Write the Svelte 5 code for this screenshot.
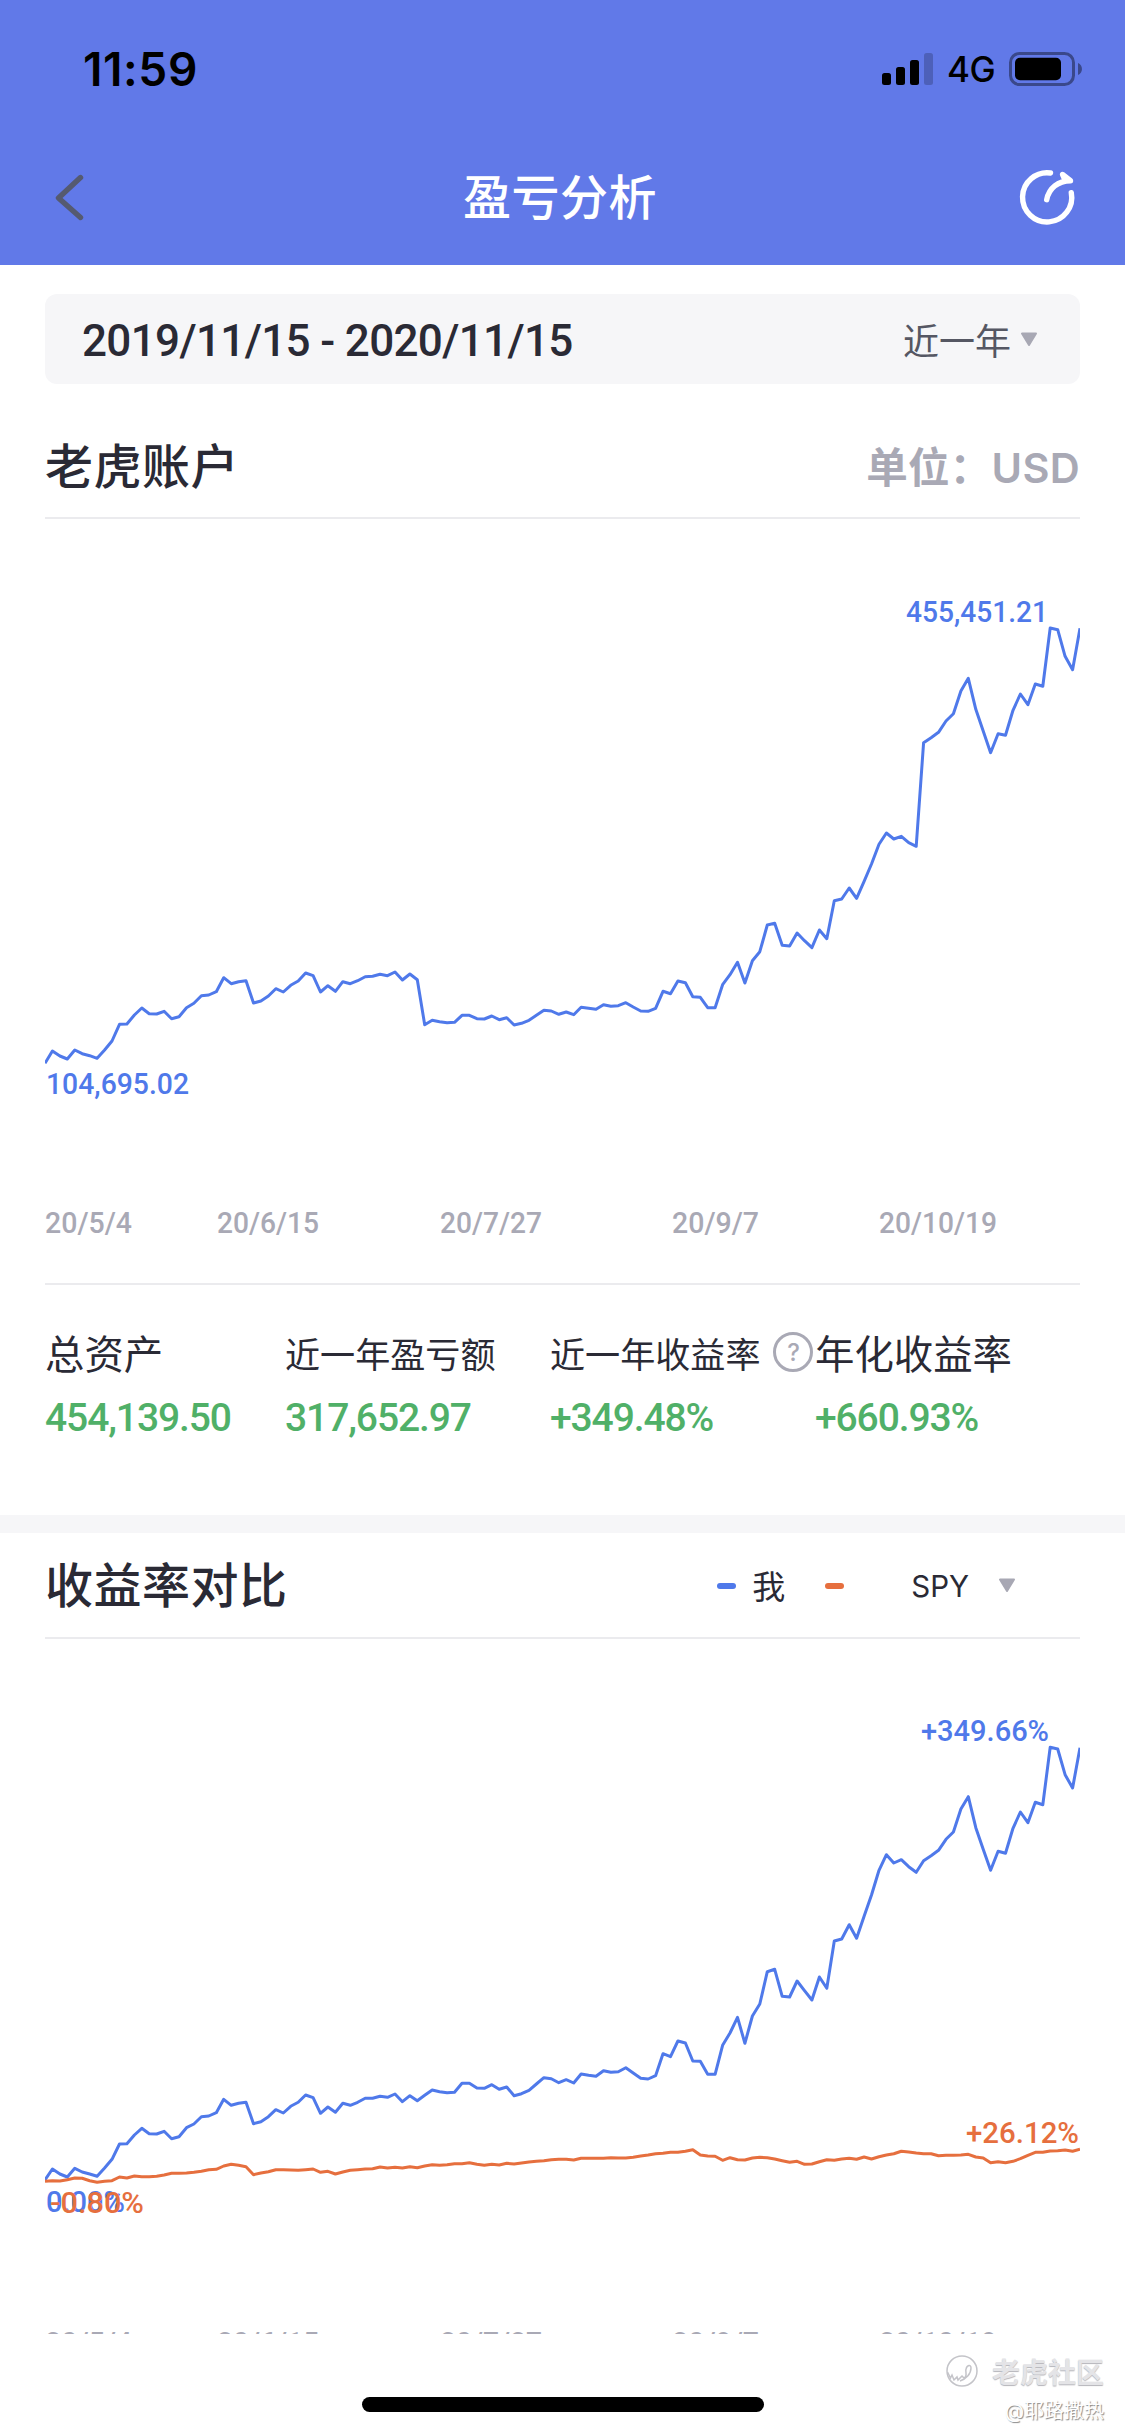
<script lang="ts">
	// Profit & loss overview: account value chart, key figures and the
	// return comparison against a benchmark.
	type Line = { color: string; points: number[] };
	type Tag = { text: string; x: number; y: number; width: number; color: string };

	const BLUE = '#4f79ea';
	const ORANGE = '#e66f3e';

	const CHART_WIDTH = 1035;
	/** samples are stored in thirds of a pixel, measured from the plot top */
	const UNIT = 3;
	const PLOT_TOP = 61;

	const assets = [
		1450, 1413, 1428, 1437, 1410, 1421, 1427, 1435, 1410, 1383, 1333, 1332, 1305, 1284, 1301, 1302,
		1294, 1316, 1310, 1283, 1270, 1247, 1245, 1235, 1193, 1211, 1205, 1202, 1269, 1263, 1248, 1226,
		1236, 1216, 1203, 1179, 1187, 1236, 1217, 1234, 1205, 1211, 1202, 1190, 1189, 1183, 1187, 1176,
		1200, 1182, 1199, 1334, 1321, 1325, 1328, 1327, 1306, 1306, 1316, 1317, 1308, 1319, 1313, 1335,
		1330, 1321, 1306, 1291, 1293, 1303, 1296, 1304, 1282, 1285, 1288, 1274, 1279, 1277, 1268, 1281,
		1293, 1294, 1285, 1234, 1241, 1203, 1208, 1250, 1252, 1283, 1283, 1214, 1184, 1147, 1209, 1142,
		1115, 1035, 1030, 1096, 1098, 1059, 1082, 1103, 1050, 1076, 962, 957, 924, 955, 904, 852, 793,
		759, 777, 769, 788, 799, 488, 473, 457, 423, 401, 333, 295, 388, 453, 518, 461, 466, 391, 342,
		374, 312, 319, 144, 149, 229, 269, 145
	];

	const mine = [
		1440, 1407, 1422, 1431, 1405, 1416, 1422, 1429, 1404, 1378, 1332, 1331, 1305, 1285, 1301, 1302,
		1294, 1316, 1310, 1283, 1272, 1250, 1248, 1238, 1198, 1216, 1210, 1207, 1271, 1265, 1250, 1229,
		1239, 1219, 1207, 1185, 1193, 1240, 1221, 1237, 1210, 1216, 1207, 1195, 1195, 1189, 1192, 1182,
		1205, 1187, 1202, 1186, 1170, 1175, 1178, 1177, 1150, 1150, 1164, 1165, 1154, 1168, 1161, 1187,
		1181, 1171, 1152, 1133, 1136, 1148, 1139, 1149, 1122, 1126, 1129, 1112, 1117, 1115, 1103, 1119,
		1135, 1137, 1127, 1061, 1070, 1023, 1029, 1083, 1084, 1123, 1123, 1036, 999, 952, 1030, 948,
		912, 815, 808, 889, 891, 843, 872, 900, 831, 865, 723, 717, 674, 715, 649, 585, 511, 464, 489,
		479, 500, 517, 482, 467, 451, 418, 396, 327, 290, 383, 448, 511, 454, 460, 385, 336, 368, 307,
		314, 142, 147, 224, 264, 143
	];

	const spy = [
		1444, 1442, 1443, 1439, 1434, 1435, 1442, 1447, 1444, 1442, 1431, 1434, 1428, 1430, 1430, 1429,
		1425, 1420, 1420, 1419, 1417, 1414, 1409, 1408, 1398, 1393, 1396, 1400, 1424, 1419, 1415, 1409,
		1409, 1410, 1411, 1409, 1407, 1417, 1414, 1422, 1416, 1411, 1409, 1407, 1406, 1401, 1404, 1402,
		1404, 1400, 1403, 1398, 1394, 1396, 1394, 1391, 1391, 1388, 1393, 1396, 1393, 1395, 1390, 1392,
		1389, 1386, 1384, 1382, 1379, 1378, 1378, 1380, 1375, 1375, 1375, 1375, 1373, 1374, 1374, 1372,
		1368, 1365, 1361, 1360, 1357, 1357, 1354, 1349, 1365, 1368, 1369, 1381, 1373, 1379, 1380, 1374,
		1372, 1373, 1377, 1382, 1387, 1384, 1393, 1392, 1385, 1379, 1381, 1377, 1375, 1378, 1371, 1377,
		1370, 1365, 1361, 1354, 1356, 1359, 1361, 1361, 1367, 1366, 1366, 1365, 1363, 1371, 1374, 1388,
		1385, 1388, 1384, 1376, 1366, 1357, 1357, 1353, 1352, 1350, 1354, 1348
	];

	const assetTags: Tag[] = [
		{ text: '455,451.21', x: 861, y: 102.5, width: 142, color: BLUE },
		{ text: '104,695.02', x: 1, y: 574.5, width: 143, color: BLUE }
	];

	const returnTags: Tag[] = [
		{ text: '+349.66%', x: 876, y: 102, width: 128, color: BLUE },
		{ text: '+26.12%', x: 921, y: 504, width: 113, color: ORANGE },
		{ text: '0.00%', x: 1, y: 572.5, width: 79, color: BLUE },
		{ text: '-0.80%', x: 5, y: 573.5, width: 94, color: ORANGE }
	];

	const ticks = [
		{ text: '20/5/4', x: 0, width: 87 },
		{ text: '20/6/15', x: 172, width: 102 },
		{ text: '20/7/27', x: 395, width: 102 },
		{ text: '20/9/7', x: 627, width: 87 },
		{ text: '20/10/19', x: 834, width: 118 }
	];

	const stats = [
		{ label: '总资产', value: '454,139.50', large: true, help: false },
		{ label: '近一年盈亏额', value: '317,652.97', large: false, help: false },
		{ label: '近一年收益率', value: '+349.48%', large: false, help: true },
		{ label: '年化收益率', value: '+660.93%', large: true, help: false }
	];

	const toPolyline = (points: number[]): string => {
		const step = CHART_WIDTH / (points.length - 1);
		return points.map((p, i) => `${(i * step).toFixed(1)},${(PLOT_TOP + p / UNIT).toFixed(1)}`).join(' ');
	};
</script>

{#snippet chart(lines: Line[], tags: Tag[])}
	<svg class="chart" width="1035" height="764" viewBox="0 0 1035 764">
		{#each lines as line (line.color)}
			<polyline points={toPolyline(line.points)} stroke={line.color} />
		{/each}
		{#each tags as tag (tag.text)}
			<text x={tag.x} y={tag.y} textLength={tag.width} lengthAdjust="spacingAndGlyphs" fill={tag.color}>{tag.text}</text>
		{/each}
		{#each ticks as tick (tick.text)}
			<text class="tick" x={tick.x} y="713.5" textLength={tick.width} lengthAdjust="spacingAndGlyphs">{tick.text}</text>
		{/each}
	</svg>
{/snippet}

{#snippet caret()}
	<svg class="caret" width="18" height="15" viewBox="0 0 18 15">
		<path d="M2 1.5h14L9 13z" />
	</svg>
{/snippet}

<div class="screen">
	<header>
		<div class="status">
			<span class="clock">11:59</span>
			<div class="indicators">
				<svg width="52" height="34" viewBox="0 0 52 34">
					<rect x="0" y="21" width="9" height="12" rx="2.5" />
					<rect x="14" y="15" width="9" height="18" rx="2.5" />
					<rect x="28" y="8" width="9" height="25" rx="2.5" />
					<rect x="42" y="1" width="9" height="32" rx="2.5" opacity="0.2" />
				</svg>
				<span class="network">4G</span>
				<svg width="74" height="34" viewBox="0 0 74 34">
					<rect x="1.5" y="1.5" width="63" height="31" rx="9" fill="none" stroke="#000" stroke-width="3" opacity="0.4" />
					<rect x="6" y="5.7" width="46" height="22.6" rx="5" />
					<path d="M69 11c5.300 2 5.300 10 0 12z" opacity="0.4" />
				</svg>
			</div>
		</div>
		<nav>
			<svg class="back" width="40" height="50" viewBox="0 0 40 50">
				<path d="M30.500 4.500L8.500 25l22 19.500" />
			</svg>
			<h1>盈亏分析</h1>
			<svg class="share" width="60" height="60" viewBox="0 0 60 60">
				<path d="M33.500 5A24.600 24.600 0 1 0 54.300 24.700" />
				<path d="M29.700 31.700C32 20 41 13 53.500 12.700L45.500 6.500l3 6.800" />
			</svg>
		</nav>
	</header>

	<main>
		<section class="account">
			<div class="range">
				<span class="dates">2019/11/15 - 2020/11/15</span>
				<span class="period">近一年{@render caret()}</span>
			</div>
			<div class="heading first">
				<h2>老虎账户</h2>
				<span class="unit">单位：USD</span>
			</div>
			{@render chart([{ color: BLUE, points: assets }], assetTags)}
			<div class="stats">
				{#each stats as stat (stat.label)}
					<div class="stat">
						<div class="label" class:large={stat.large}>
							{stat.label}
							{#if stat.help}
								<span class="help">?</span>
							{/if}
						</div>
						<div class="value">{stat.value}</div>
					</div>
				{/each}
			</div>
		</section>

		<section class="compare">
			<div class="heading second">
				<h2>收益率对比</h2>
				<div class="legend">
					<i class="dash mine"></i>
					<span class="me">我</span>
					<i class="dash other"></i>
					<span class="bench">SPY</span>
					{@render caret()}
				</div>
			</div>
			{@render chart(
				[
					{ color: BLUE, points: mine },
					{ color: ORANGE, points: spy }
				],
				returnTags
			)}
		</section>
	</main>

	<footer>
		<div class="home"></div>
		<div class="watermark">
			<div class="brand">
				<svg width="34" height="34" viewBox="0 0 34 34">
					<circle cx="17" cy="17" r="15" />
					<path d="M2.500 18l3 6 1.500-3 2 5 3-3 1 3 4-4 2 2c4-2 1-6 2-9 1-4 5-5 5-1 0 6-5 11-11 13" />
				</svg>
				老虎社区
			</div>
			<div class="author">@耶路撒热</div>
		</div>
	</footer>
</div>

<style>
	:global(body) {
		background: #fff;
	}

	.screen {
		width: 1125px;
		height: 2436px;
		overflow: hidden;
		background: #fff;
		color: #2a2a35;
		font-family: Inter, 'Noto Sans CJK SC', sans-serif;
	}

	header {
		height: 265px;
		background: #6179e8;
	}

	.status {
		display: flex;
		justify-content: space-between;
		align-items: center;
		height: 138px;
		padding: 0 42px 0 83px;
		color: #000;
	}

	.clock {
		font-size: 46px;
		font-weight: 600;
		letter-spacing: 0.6px;
	}

	.indicators {
		display: flex;
		align-items: center;
	}

	.network {
		width: 62px;
		padding-left: 13px;
		font-size: 35px;
		font-weight: 500;
		letter-spacing: -0.5px;
	}

	nav {
		display: grid;
		grid-template-columns: 60px 1fr 60px;
		align-items: center;
		height: 120px;
		padding: 0 48px 0 50px;
	}

	nav svg {
		fill: none;
		stroke-linecap: round;
		stroke-linejoin: round;
		stroke-width: 5.4;
	}

	.back {
		stroke: #555a70;
	}

	.share {
		stroke: #fff;
	}

	h1,
	h2 {
		margin: 0;
		font-size: 48px;
		line-height: 60px;
		font-weight: 500;
		letter-spacing: 0.5px;
	}

	h1 {
		padding-right: 7px;
		color: #fff;
		text-align: center;
	}

	main {
		height: 2069px;
		overflow: hidden;
	}

	.account {
		height: 1250px;
		padding: 29px 45px 0;
		box-sizing: border-box;
	}

	.range {
		display: flex;
		justify-content: space-between;
		align-items: center;
		height: 90px;
		padding: 0 42px 0 37px;
		border-radius: 12px;
		background: #f6f6f8;
	}

	.dates {
		padding-top: 4px;
		font: 500 44px/90px Roboto, sans-serif;
		letter-spacing: -0.65px;
	}

	.period {
		display: flex;
		align-items: center;
		gap: 9px;
		color: #555763;
		font-size: 36px;
		font-weight: 400;
	}

	.caret path {
		fill: #a8a8b4;
		stroke: #a8a8b4;
		stroke-width: 2;
		stroke-linejoin: round;
	}

	.heading {
		display: flex;
		justify-content: space-between;
		align-items: center;
		box-sizing: border-box;
		border-bottom: 2px solid #ebebee;
	}

	.first {
		height: 135px;
		padding-top: 32px;
	}

	.second {
		height: 106px;
		padding-top: 1px;
	}

	.unit {
		padding-bottom: 4px;
		color: #a9a9b5;
		font-size: 41.500px;
		font-weight: 600;
		letter-spacing: 0.3px;
	}

	.chart {
		display: block;
	}

	.chart polyline {
		fill: none;
		stroke-width: 3;
		stroke-linejoin: round;
	}

	.chart text {
		font: 500 29px Roboto, sans-serif;
	}

	.chart .tick {
		fill: #a9a9b5;
		font-size: 30px;
	}

	.stats {
		display: grid;
		grid-template-columns: 240px 265px 265px 265px;
		padding-top: 41px;
		border-top: 2px solid #ebebee;
	}

	.label {
		display: flex;
		align-items: center;
		height: 52px;
		font-size: 35.100px;
		white-space: nowrap;
	}

	.label.large {
		padding-bottom: 2px;
		height: 50px;
		font-size: 39.4px;
	}

	.help {
		display: flex;
		justify-content: center;
		align-items: center;
		width: 40px;
		height: 40px;
		margin-left: 13px;
		box-sizing: border-box;
		border: 3px solid #a9a9b5;
		border-radius: 50%;
		color: #a9a9b5;
		font-size: 24px;
		font-weight: 500;
	}

	.value {
		margin-top: 17px;
		color: #50b068;
		font: 500 39px/46px Roboto, sans-serif;
		letter-spacing: -1.1px;
	}

	.compare {
		padding: 0 45px;
		border-top: 18px solid #f6f6f8;
	}

	.legend {
		display: flex;
		align-items: center;
		padding-right: 64px;
	}

	.dash {
		width: 19px;
		height: 6px;
		border-radius: 3px;
	}

	.dash.mine {
		background: #4f79ea;
	}

	.dash.other {
		background: #e66f3e;
	}

	.me {
		margin: 0 40px 2px 16px;
		font-size: 33px;
	}

	.bench {
		margin: 0 29px 0 67px;
		font-size: 29.500px;
	}

	footer {
		display: flow-root;
		position: relative;
		height: 102px;
	}

	.home {
		width: 402px;
		height: 15px;
		margin: 63px auto 0;
		border-radius: 8px;
		background: #000;
	}

	/* stamped over the bottom corner of the page */
	.watermark {
		position: absolute;
		top: 18px;
		right: 21px;
		display: flex;
		flex-direction: column;
		align-items: flex-end;
	}

	.brand {
		display: flex;
		align-items: center;
		gap: 13px;
		height: 38px;
		color: #e4e4e7;
		font-size: 28px;
		font-weight: 700;
		text-shadow: 0 1px 1px #b4b4ba;
	}

	.brand svg {
		fill: none;
		stroke: #c4c4c9;
		stroke-width: 1.5;
	}

	.author {
		color: #fff;
		font-size: 20px;
		line-height: 42px;
		text-shadow: 1px 1px 1px #888;
	}
</style>
